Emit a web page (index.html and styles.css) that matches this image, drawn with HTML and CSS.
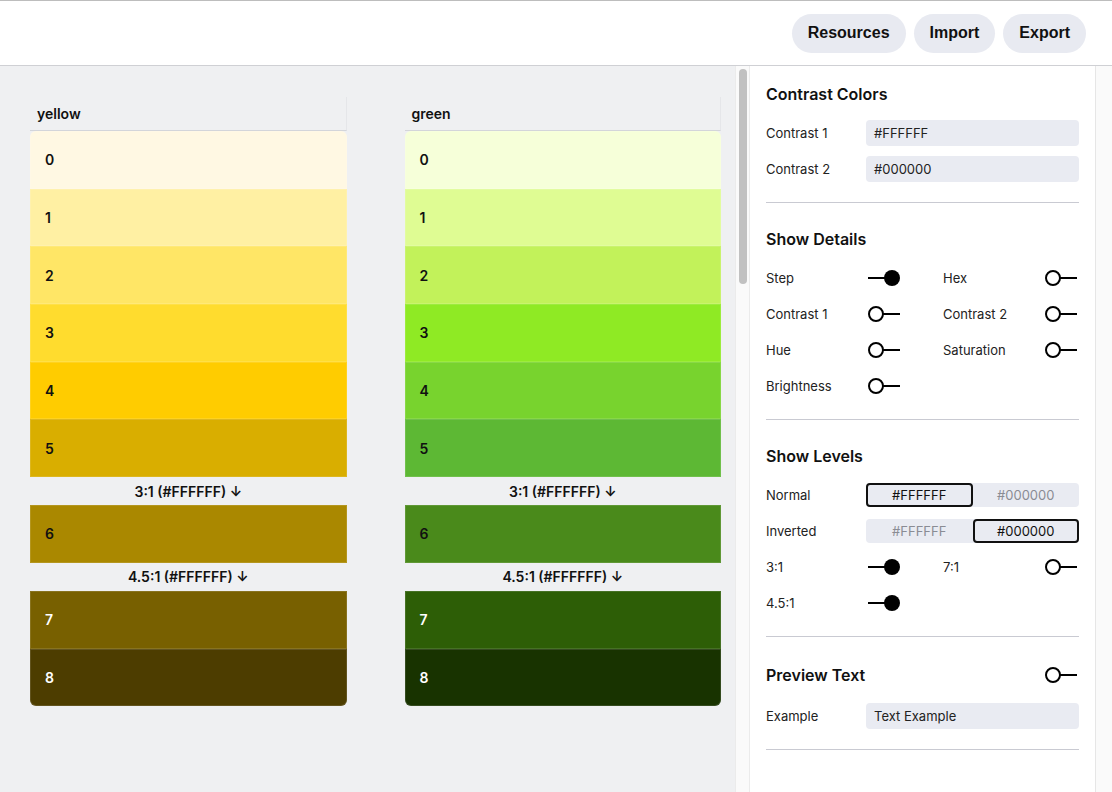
FILE: index.html
```html
<!DOCTYPE html>
<html>
<head>
<meta charset="utf-8">
<link rel="stylesheet" href="styles.css">
</head>
<body>
<header class="topbar">
  <button class="pill">Resources</button>
  <button class="pill">Import</button>
  <button class="pill">Export</button>
</header>
<main class="main">
  <section class="palettes">
    <div class="column">
      <div class="col-head">yellow</div>
      <div class="swatch first" style="background:#fff8e3">0</div>
      <div class="swatch" style="background:#fff0a3">1</div>
      <div class="swatch" style="background:#ffe666">2</div>
      <div class="swatch" style="background:#ffdc2e">3</div>
      <div class="swatch" style="background:#ffcc00">4</div>
      <div class="swatch" style="background:#d9ae00">5</div>
      <div class="level">3:1 (#FFFFFF) ↓</div>
      <div class="swatch" style="background:#aa8800">6</div>
      <div class="level">4.5:1 (#FFFFFF) ↓</div>
      <div class="swatch light" style="background:#786000">7</div>
      <div class="swatch light last" style="background:#4d3d00">8</div>
    </div>
    <div class="column">
      <div class="col-head">green</div>
      <div class="swatch first" style="background:#f6ffd9">0</div>
      <div class="swatch" style="background:#dffc93">1</div>
      <div class="swatch" style="background:#c2f25a">2</div>
      <div class="swatch" style="background:#8fea24">3</div>
      <div class="swatch" style="background:#78d32e">4</div>
      <div class="swatch" style="background:#5db834">5</div>
      <div class="level">3:1 (#FFFFFF) ↓</div>
      <div class="swatch" style="background:#4a8a1b">6</div>
      <div class="level">4.5:1 (#FFFFFF) ↓</div>
      <div class="swatch light" style="background:#2d5e06">7</div>
      <div class="swatch light last" style="background:#183300">8</div>
    </div>
  </section>
  <div class="track track-left"><div class="thumb"></div></div>
  <aside class="panel">
    <div class="section first-section">
      <h2 class="title">Contrast Colors</h2>
      <div class="field"><span class="label">Contrast 1</span><div class="input">#FFFFFF</div></div>
      <div class="field"><span class="label">Contrast 2</span><div class="input">#000000</div></div>
    </div>
    <div class="section">
      <h2 class="title">Show Details</h2>
      <div class="toggles">
        <div class="tog"><span class="label">Step</span><svg class="sw" viewBox="0 0 32 16"><line x1="0" y1="8" x2="17" y2="8"/><circle class="on" cx="24" cy="8" r="8"/></svg></div>
        <div class="tog"><span class="label">Hex</span><svg class="sw" viewBox="0 0 32 16"><circle class="off" cx="8" cy="8" r="7"/><line x1="15" y1="8" x2="32" y2="8"/></svg></div>
        <div class="tog"><span class="label">Contrast 1</span><svg class="sw" viewBox="0 0 32 16"><circle class="off" cx="8" cy="8" r="7"/><line x1="15" y1="8" x2="32" y2="8"/></svg></div>
        <div class="tog"><span class="label">Contrast 2</span><svg class="sw" viewBox="0 0 32 16"><circle class="off" cx="8" cy="8" r="7"/><line x1="15" y1="8" x2="32" y2="8"/></svg></div>
        <div class="tog"><span class="label">Hue</span><svg class="sw" viewBox="0 0 32 16"><circle class="off" cx="8" cy="8" r="7"/><line x1="15" y1="8" x2="32" y2="8"/></svg></div>
        <div class="tog"><span class="label">Saturation</span><svg class="sw" viewBox="0 0 32 16"><circle class="off" cx="8" cy="8" r="7"/><line x1="15" y1="8" x2="32" y2="8"/></svg></div>
        <div class="tog"><span class="label">Brightness</span><svg class="sw" viewBox="0 0 32 16"><circle class="off" cx="8" cy="8" r="7"/><line x1="15" y1="8" x2="32" y2="8"/></svg></div>
      </div>
    </div>
    <div class="section">
      <h2 class="title">Show Levels</h2>
      <div class="field"><span class="label">Normal</span><div class="seg"><span class="opt sel">#FFFFFF</span><span class="opt">#000000</span></div></div>
      <div class="field"><span class="label">Inverted</span><div class="seg"><span class="opt">#FFFFFF</span><span class="opt sel">#000000</span></div></div>
      <div class="toggles">
        <div class="tog"><span class="label">3:1</span><svg class="sw" viewBox="0 0 32 16"><line x1="0" y1="8" x2="17" y2="8"/><circle class="on" cx="24" cy="8" r="8"/></svg></div>
        <div class="tog"><span class="label">7:1</span><svg class="sw" viewBox="0 0 32 16"><circle class="off" cx="8" cy="8" r="7"/><line x1="15" y1="8" x2="32" y2="8"/></svg></div>
        <div class="tog"><span class="label">4.5:1</span><svg class="sw" viewBox="0 0 32 16"><line x1="0" y1="8" x2="17" y2="8"/><circle class="on" cx="24" cy="8" r="8"/></svg></div>
      </div>
    </div>
    <div class="section">
      <div class="title-row">
        <h2 class="title">Preview Text</h2>
        <svg class="sw" viewBox="0 0 32 16"><circle class="off" cx="8" cy="8" r="7"/><line x1="15" y1="8" x2="32" y2="8"/></svg>
      </div>
      <div class="field"><span class="label">Example</span><div class="input">Text Example</div></div>
    </div>
  </aside>
  <div class="track track-right"></div>
</main>
</body>
</html>
```
FILE: styles.css
```css
* { box-sizing: border-box; }
html, body { margin: 0; padding: 0; }
body {
  width: 1112px;
  height: 792px;
  overflow: hidden;
  font-family: Inter, "Liberation Sans", sans-serif;
  color: #111;
  background: #fff;
}
.topbar {
  height: 66px;
  border-top: 1px solid #bdbdbd;
  border-bottom: 1px solid #cfd0d4;
  display: flex;
  align-items: center;
  justify-content: flex-end;
  gap: 8px;
  padding-right: 26px;
}
.pill {
  height: 39px;
  border: none;
  border-radius: 20px;
  background: #e8eaf1;
  padding: 0 16px;
  font-family: "Liberation Sans", Arial, sans-serif;
  font-weight: 700;
  font-size: 16px;
  color: #111;
}
.main {
  display: flex;
  height: 726px;
}
.palettes {
  width: 735px;
  background: #eff0f2;
  display: flex;
  align-items: flex-start;
  gap: 58px;
  padding: 31px 0 0 30px;
  overflow: hidden;
}
.column {
  width: 316.5px;
  display: flex;
  flex-direction: column;
}
.col-head {
  height: 34px;
  padding-left: 7px;
  display: flex;
  align-items: center;
  font-weight: 600;
  font-size: 14px;
  border-bottom: 1px solid #d3d5da;
  border-right: 1px solid #e5e6e9;
}
.swatch {
  height: 57.7px;
  flex: none;
  padding-left: 15px;
  display: flex;
  align-items: center;
  font-weight: 600;
  font-size: 14px;
  color: #111;
  box-shadow: inset 0 0 0 1px rgba(255,255,255,0.12);
}
.swatch.light { color: #fff; }
.swatch.first { border-radius: 6px 6px 0 0; }
.swatch.last { border-radius: 0 0 6px 6px; }
.level {
  height: 28px;
  flex: none;
  display: flex;
  align-items: center;
  justify-content: center;
  font-weight: 600;
  font-size: 14px;
  color: #111;
}
.track {
  background: #fafafa;
}
.track-left {
  width: 15px;
  border-left: 1px solid #ebebeb;
  border-right: 1px solid #ebebeb;
  padding: 3px 0 0 3px;
}
.thumb {
  width: 8px;
  height: 215px;
  border-radius: 4px;
  background: #c1c1c1;
}
.panel {
  width: 345px;
  padding: 0 16px;
  background: #fff;
}
.track-right {
  width: 17px;
  border-left: 1px solid #e6e6e6;
}
.section {
  padding: 26px 0 15px;
  border-bottom: 1px solid #c9cad2;
}
.section.first-section { padding-top: 18px; }
.title {
  margin: 0 0 11px;
  font-size: 16px;
  line-height: 20px;
  font-weight: 600;
  color: #111;
}
.title-row {
  height: 24px;
  display: flex;
  justify-content: space-between;
  align-items: center;
  padding-right: 2px;
  margin-bottom: 11px;
}
.title-row .title { margin: 0; }
.field {
  height: 36px;
  display: flex;
  align-items: center;
}
.label {
  width: 100px;
  flex: none;
  font-size: 13px;
  color: #222;
}
.input {
  flex: 1;
  height: 26px;
  border-radius: 4px;
  background: #e9ebf2;
  padding-left: 8px;
  display: flex;
  align-items: center;
  font-size: 13px;
  color: #222;
}
.seg {
  flex: 1;
  height: 24px;
  border-radius: 4px;
  background: #e9ebf2;
  display: flex;
}
.opt {
  width: 50%;
  flex: none;
  display: flex;
  align-items: center;
  justify-content: center;
  font-size: 13px;
  color: #8a8c94;
  border-radius: 4px;
}
.opt.sel {
  border: 2px solid #111;
  color: #111;
}
.toggles {
  display: grid;
  grid-template-columns: 177px 136px;
}
.tog {
  height: 36px;
  display: flex;
  align-items: center;
}
.tog .label { width: 102px; }
.sw {
  width: 32px;
  height: 16px;
  display: block;
  overflow: visible;
}
.sw line { stroke: #000; stroke-width: 2; }
.sw .on { fill: #000; }
.sw .off { fill: #fff; stroke: #000; stroke-width: 2; }
```
